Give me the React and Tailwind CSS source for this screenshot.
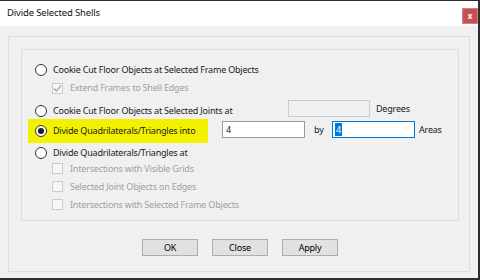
import React from 'react';

const font = { fontFamily: '"Noto Sans", "Liberation Sans", sans-serif' };

const Radio = ({ checked }) => (
  <span className="w-[12px] h-[12px] rounded-full border border-[#333] bg-white flex items-center justify-center shrink-0">
    {checked && <span className="w-[6px] h-[6px] rounded-full bg-[#1a1a1a]" />}
  </span>
);

const Check = ({ checked }) => (
  <span className="w-[11px] h-[11px] border border-[#cccccc] bg-[#f7f7f7] flex items-center justify-center shrink-0">
    {checked && (
      <svg width="9" height="9" viewBox="0 0 9 9">
        <path d="M1 4.5 L3.5 7 L8 1.5" fill="none" stroke="#a8a8a8" strokeWidth="1.2" />
      </svg>
    )}
  </span>
);

const CheckRow = ({ label, checked }) => (
  <div className="h-[11px] flex items-center pl-[30px] gap-[7px]">
    <Check checked={checked} />
    <span className="text-[#a0a0a0] whitespace-nowrap">{label}</span>
  </div>
);

const Btn = ({ children }) => (
  <button className="w-[56px] h-[17px] border border-[#adadad] bg-[#e1e1e1] text-[#000] flex items-center justify-center leading-none">
    {children}
  </button>
);

export default function App() {
  return (
    <div className="w-[480px] h-[280px] bg-[#2d2d2d] overflow-hidden text-[9px] tracking-[-0.2px] text-[#1a1a1a]" style={font}>
      <div className="w-[478px] h-[277px] mt-[1px] flex flex-col bg-[#f0f0f0]">
        {/* title bar */}
        <div className="h-[25px] bg-white flex items-center justify-between pl-[7px]">
          <span className="text-[9.5px] tracking-[-0.15px] text-[#111]">Divide Selected Shells</span>
          <span className="w-[16px] h-[16px] bg-[#c75050] border border-[#d98080] text-white text-[8px] font-bold flex items-center justify-center leading-none mt-[5px]">x</span>
        </div>

        <div className="pl-[8px] pt-[10px]">
          <div className="w-[462px] h-[236px] border border-[#dcdcdc] pl-[12px] pt-[12px] flex flex-col items-start">
            <div className="w-[438px] h-[172px] border border-[#dcdcdc] pt-[10px] flex flex-col">
              {/* row 1 */}
              <div className="h-[19px] flex items-center pl-[13px] gap-[6px]">
                <Radio />
                <span className="whitespace-nowrap">Cookie Cut Floor Objects at Selected Frame Objects</span>
              </div>
              {/* row 2 */}
              <div className="h-[18px] flex items-center">
                <CheckRow label="Extend Frames to Shell Edges" checked />
              </div>
              {/* row 3 */}
              <div className="h-[22px] flex items-start">
                <div className="w-[266px] h-[16px] mt-[6px] flex items-center pl-[13px] gap-[6px]">
                  <Radio />
                  <span className="whitespace-nowrap">Cookie Cut Floor Objects at Selected Joints at</span>
                </div>
                <div className="w-[82px] h-[17px] mt-[3px] border border-[#cccccc] bg-[#f0f0f0]" />
                <span className="ml-[6px] mt-[3px] h-[17px] flex items-center">Degrees</span>
              </div>
              {/* row 4 */}
              <div className="h-[24px] flex items-start">
                <div className="ml-[6px] w-[180px] h-[24px] bg-[#f2f200] flex items-center pl-[7px] gap-[6px]">
                  <Radio checked />
                  <span className="whitespace-nowrap">Divide Quadrilaterals/Triangles into</span>
                </div>
                <div className="ml-[14px] mt-[2px] w-[83px] h-[17px] border border-[#9a9a9a] bg-white flex items-center pl-[3px]">4</div>
                <span className="ml-[9px] mt-[2px] w-[18px] h-[17px] flex items-center">by</span>
                <div className="mt-[2px] w-[83px] h-[17px] border border-[#0078d7] bg-white flex items-center pl-[2px]">
                  <span className="bg-[#0078d7] text-white px-[1px] leading-[13px]">4</span>
                </div>
                <span className="ml-[4px] mt-[2px] h-[17px] flex items-center">Areas</span>
              </div>
              {/* row 5 */}
              <div className="h-[20px] flex items-center pl-[13px] gap-[6px]">
                <Radio />
                <span className="whitespace-nowrap">Divide Quadrilaterals/Triangles at</span>
              </div>
              <div className="flex flex-col gap-[7px]">
                <CheckRow label="Intersections with Visible Grids" />
                <CheckRow label="Selected Joint Objects on Edges" />
                <CheckRow label="Intersections with Selected Frame Objects" />
              </div>
            </div>
            <div className="w-[438px] mt-[18px] flex justify-center gap-[14px]">
              <Btn>OK</Btn>
              <Btn>Close</Btn>
              <Btn>Apply</Btn>
            </div>
          </div>
        </div>
      </div>
    </div>
  );
}
